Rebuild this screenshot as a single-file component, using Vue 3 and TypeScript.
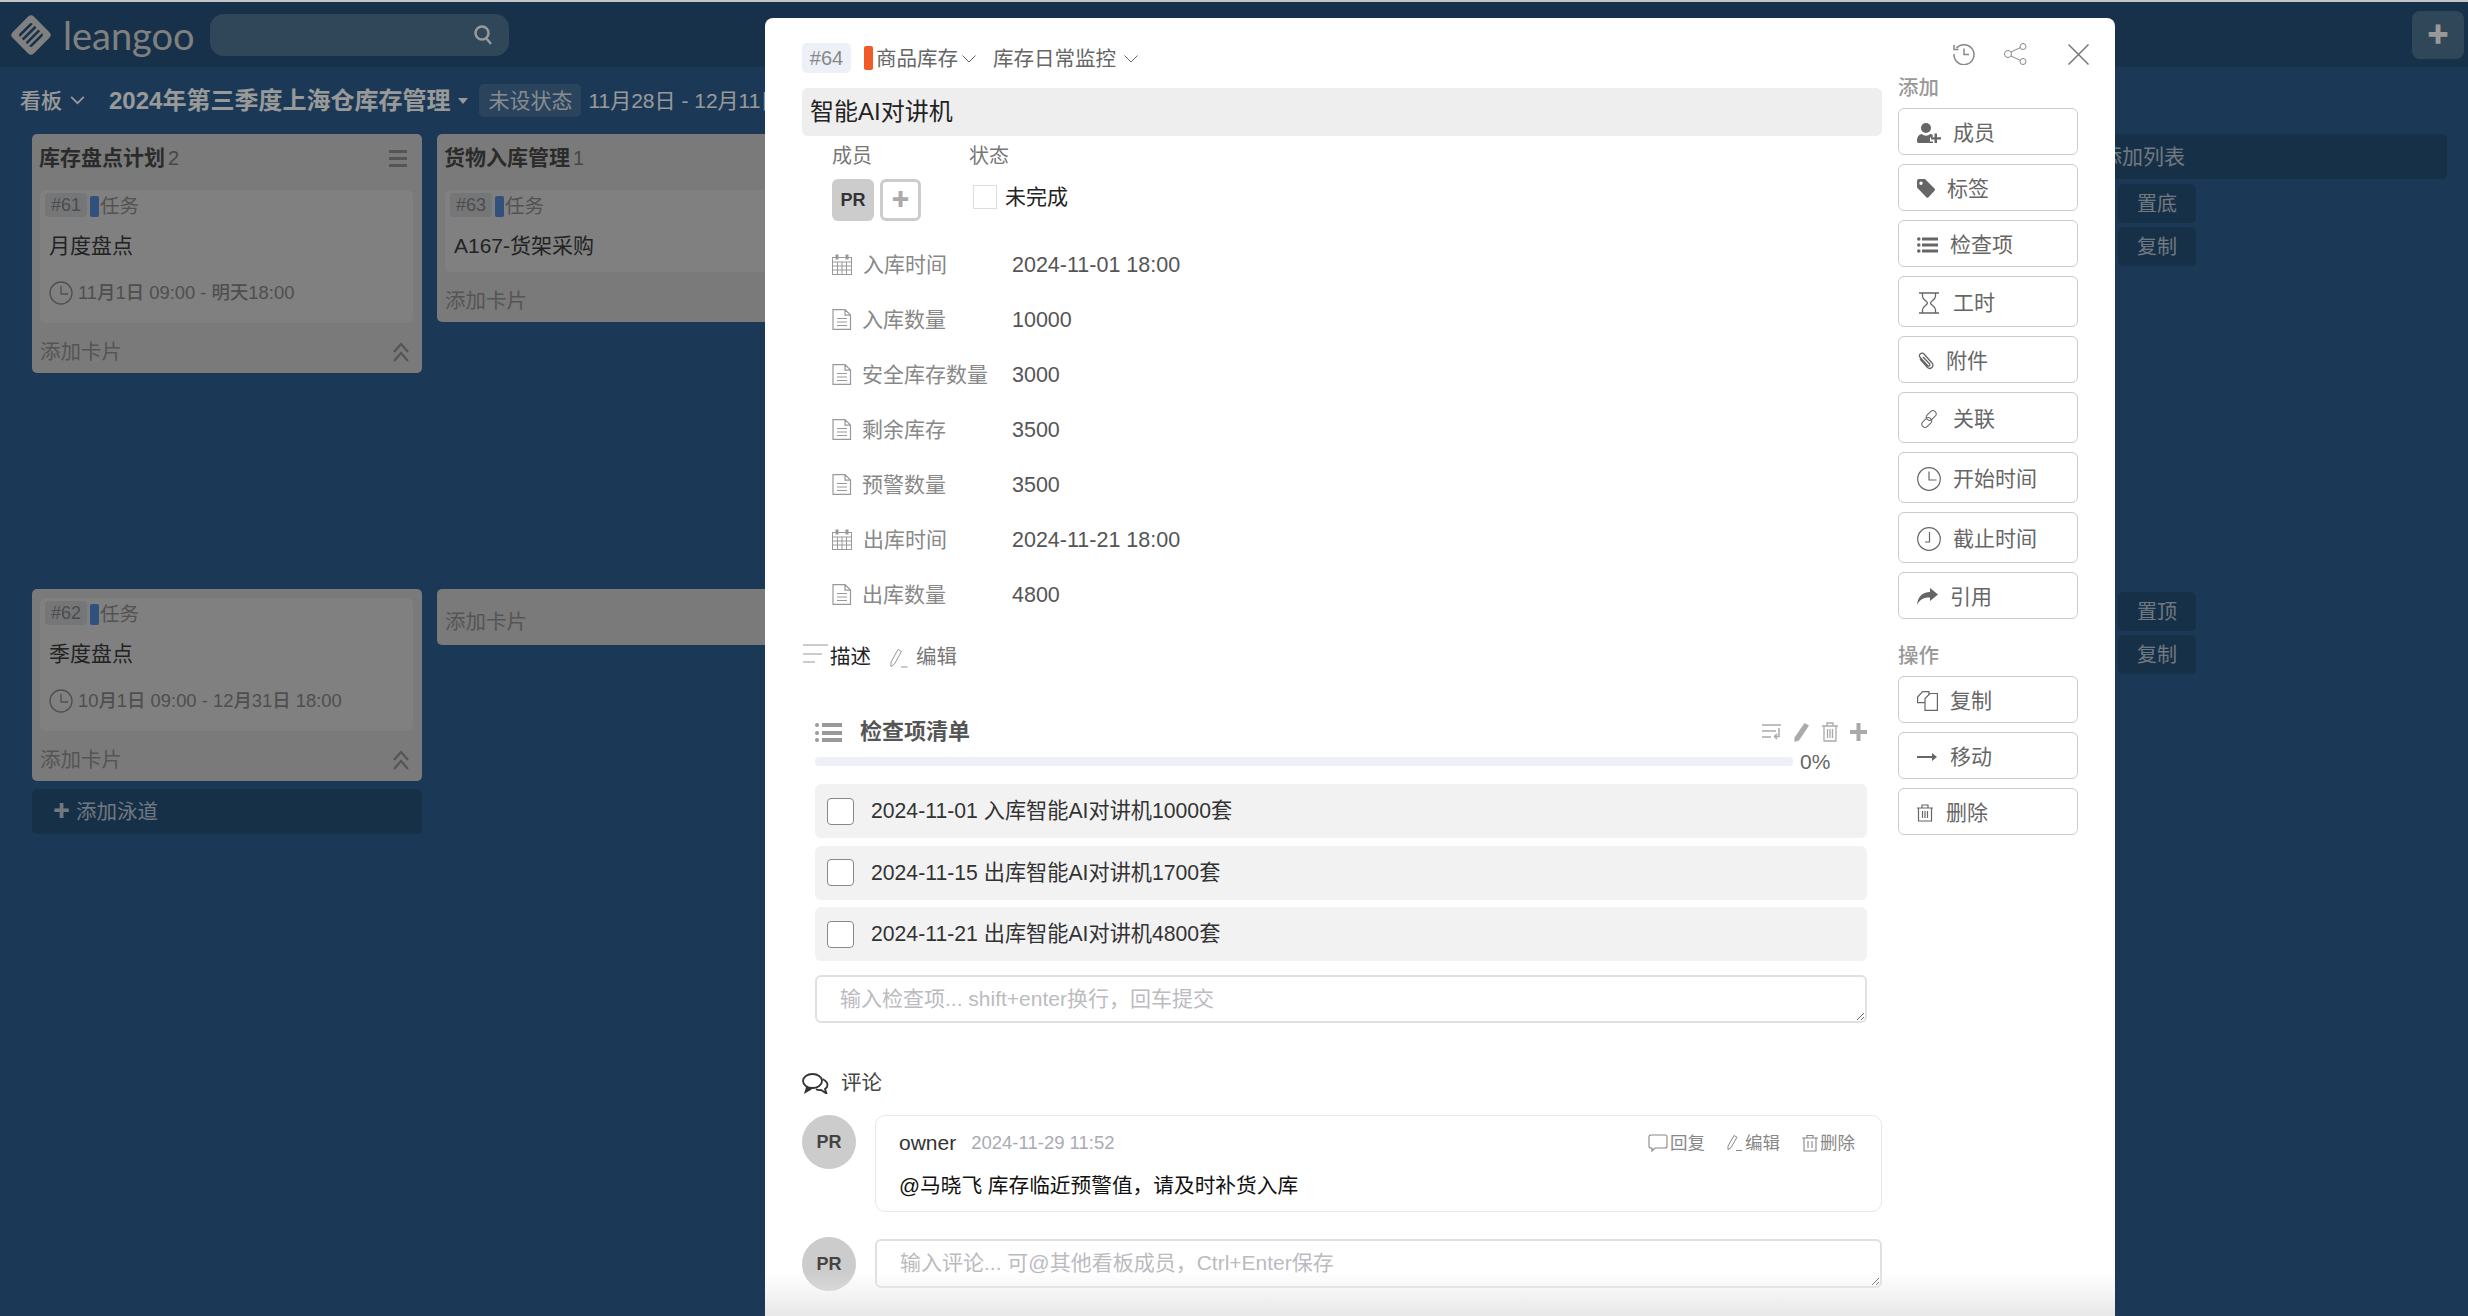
<script setup lang="ts">
type Card = { id: number; title: string; date?: string }
type List = { title: string; count?: number; cards: Card[] }

const laneOne: List[] = [
  { title: '库存盘点计划', count: 2, cards: [{ id: 61, title: '月度盘点', date: '11月1日 09:00 - 明天18:00' }] },
  { title: '货物入库管理', count: 1, cards: [{ id: 63, title: 'A167-货架采购' }] }
]

const laneTwo: Card[] = [{ id: 62, title: '季度盘点', date: '10月1日 09:00 - 12月31日 18:00' }]

const fields = [
  { icon: 'cal', label: '入库时间', value: '2024-11-01 18:00' },
  { icon: 'doc', label: '入库数量', value: '10000' },
  { icon: 'doc', label: '安全库存数量', value: '3000' },
  { icon: 'doc', label: '剩余库存', value: '3500' },
  { icon: 'doc', label: '预警数量', value: '3500' },
  { icon: 'cal', label: '出库时间', value: '2024-11-21 18:00' },
  { icon: 'doc', label: '出库数量', value: '4800' }
]

const checks = [
  '2024-11-01 入库智能AI对讲机10000套',
  '2024-11-15 出库智能AI对讲机1700套',
  '2024-11-21 出库智能AI对讲机4800套'
]

const addButtons = [
  { icon: 'user', label: '成员', left: 36, tall: false },
  { icon: 'tag', label: '标签', left: 30, tall: false },
  { icon: 'list', label: '检查项', left: 33, tall: false },
  { icon: 'hour', label: '工时', left: 36, tall: true },
  { icon: 'clip', label: '附件', left: 29, tall: false },
  { icon: 'link', label: '关联', left: 36, tall: true },
  { icon: 'start', label: '开始时间', left: 36, tall: true },
  { icon: 'end', label: '截止时间', left: 36, tall: true },
  { icon: 'quote', label: '引用', left: 33, tall: false }
]

const opButtons = [
  { icon: 'copy', label: '复制', left: 33, tall: false },
  { icon: 'move', label: '移动', left: 33, tall: false },
  { icon: 'trash', label: '删除', left: 29, tall: false }
]
</script>

<template>
  <div class="page">
    <div class="strip"></div>

    <header class="topbar">
      <svg class="logo" viewBox="0 0 42 42">
        <g transform="rotate(45 21 21)">
          <rect x="6" y="6" width="30" height="30" rx="4" fill="#d5d5d5" />
          <rect x="12" y="12" width="18" height="18" rx="2" fill="#25537b" />
          <rect x="14.500" y="8" width="2.600" height="24" fill="#d5d5d5" />
          <rect x="19.700" y="8" width="2.600" height="24" fill="#d5d5d5" />
          <rect x="24.900" y="8" width="2.600" height="24" fill="#d5d5d5" />
        </g>
      </svg>
      <span class="brand">leangoo</span>
      <div class="search">
        <svg viewBox="0 0 20 22" width="20" height="22" fill="none" stroke="#fff" stroke-width="2.500">
          <circle cx="9" cy="9" r="6.500" />
          <path d="M13 14l5 6" />
        </svg>
      </div>
      <div class="top-plus">✚</div>
    </header>

    <div class="board">
      <div class="board-head">
        <div class="view-switch">看板
          <svg viewBox="0 0 16 10" width="15" height="9" fill="none" stroke="#fff" stroke-width="2"><path d="M1 1l7 7 7-7" /></svg>
        </div>
        <div class="board-title">2024年第三季度上海仓库存管理</div>
        <span class="caret"></span>
        <span class="status-pill">未设状态</span>
        <span class="board-date">11月28日 - 12月11日</span>
      </div>

      <div class="lane lane-one">
        <section v-for="list in laneOne" :key="list.title" class="list">
          <div class="list-head">
            <span class="list-title">{{ list.title }}</span>
            <span class="list-count">{{ list.count }}</span>
            <svg v-if="list.count === 2" class="list-menu" viewBox="0 0 18 17" fill="#8e8e8e">
              <rect y="0" width="18" height="3" /><rect y="7" width="18" height="3" /><rect y="14" width="18" height="3" />
            </svg>
          </div>
          <article v-for="card in list.cards" :key="card.id" class="card" :class="{ 'has-date': card.date }">
            <div class="card-top">
              <span class="card-id">#{{ card.id }}</span>
              <span class="card-bar"></span>
              <span class="card-type">任务</span>
            </div>
            <div class="card-title">{{ card.title }}</div>
            <div v-if="card.date" class="card-date">
              <svg viewBox="0 0 24 24" width="24" height="24" fill="none" stroke="#848484" stroke-width="1.300">
                <circle cx="12" cy="12" r="11" /><path d="M12 5v8h7" />
              </svg>
              {{ card.date }}
            </div>
          </article>
          <div class="list-foot">
            <span>添加卡片</span>
            <svg v-if="list.count === 2" viewBox="0 0 18 22" width="18" height="22" fill="none" stroke="#8e8e8e" stroke-width="2.200">
              <path d="M2 11l7-8 7 8M2 20l7-8 7 8" />
            </svg>
          </div>
        </section>
        <div class="add-col">
          <div class="add-list"><span>添加列表</span></div>
          <div class="side-btn">置底</div>
          <div class="side-btn">复制</div>
        </div>
      </div>

      <div class="lane lane-two">
        <section class="list">
          <article v-for="card in laneTwo" :key="card.id" class="card has-date first-card">
            <div class="card-top">
              <span class="card-id">#{{ card.id }}</span>
              <span class="card-bar"></span>
              <span class="card-type">任务</span>
            </div>
            <div class="card-title">{{ card.title }}</div>
            <div class="card-date">
              <svg viewBox="0 0 24 24" width="24" height="24" fill="none" stroke="#848484" stroke-width="1.300">
                <circle cx="12" cy="12" r="11" /><path d="M12 5v8h7" />
              </svg>
              {{ card.date }}
            </div>
          </article>
          <div class="list-foot">
            <span>添加卡片</span>
            <svg viewBox="0 0 18 22" width="18" height="22" fill="none" stroke="#8e8e8e" stroke-width="2.200">
              <path d="M2 11l7-8 7 8M2 20l7-8 7 8" />
            </svg>
          </div>
        </section>
        <section class="list list-empty">
          <div class="list-foot">
            <span>添加卡片</span>
          </div>
        </section>
        <div class="add-col no-add">
          <div class="side-btn">置顶</div>
          <div class="side-btn">复制</div>
        </div>
      </div>

      <div class="add-lane"><span class="add-lane-plus">✚</span>添加泳道</div>
    </div>

    <div class="mask"></div>

    <div class="modal">
      <div class="modal-main">
        <div class="crumbs">
          <span class="task-id">#64</span>
          <span class="task-bar"></span>
          <span class="crumb">商品库存</span>
          <svg class="chev" viewBox="0 0 14 8" fill="none" stroke="#666" stroke-width="1"><path d="M.5.5L7 7 13.500.5" /></svg>
          <span class="crumb crumb-second">库存日常监控</span>
          <svg class="chev chev-last" viewBox="0 0 14 8" fill="none" stroke="#666" stroke-width="1"><path d="M.5.5L7 7 13.500.5" /></svg>
        </div>
        <div class="task-title">智能AI对讲机</div>

        <div class="meta">
          <div class="meta-members">
            <div class="meta-label">成员</div>
            <div class="member-row">
              <span class="member">PR</span>
              <span class="member-add">✚</span>
            </div>
          </div>
          <div>
            <div class="meta-label">状态</div>
            <div class="status-row">
              <span class="status-box"></span>
              未完成
            </div>
          </div>
        </div>

        <div class="fields">
          <div v-for="f in fields" :key="f.label" class="field">
            <svg v-if="f.icon === 'cal'" class="field-icon" viewBox="0 0 20 21" fill="none" stroke="#999" stroke-width="1">
              <rect x=".5" y="3.500" width="19" height="17" fill="#fff" />
              <path d="M.5 8h19M.5 12h19M.5 16h19M5.500 8v12M10 8v12M14.500 8v12" />
              <path d="M5 .5v5M15 .5v5" stroke-width="3" />
            </svg>
            <svg v-else class="field-icon" viewBox="0 0 20 21" fill="none" stroke="#999" stroke-width="1.200">
              <path d="M1 .6h12l5.500 5.500V20.400H1zM13 .6v5.500h5.500M5 9.500h10M5 13h10M5 16.500h10" />
            </svg>
            <span class="field-label" :class="{ wide: f.icon === 'cal' }">{{ f.label }}</span>
            <span class="field-value">{{ f.value }}</span>
          </div>
        </div>

        <div class="desc">
          <svg class="desc-icon" viewBox="0 0 25 19" fill="none" stroke="#999" stroke-width="1.200">
            <path d="M0 1h25M0 10h19M0 18h12" />
          </svg>
          <span class="desc-title">描述</span>
          <svg class="desc-edit" viewBox="0 0 18 20" fill="none" stroke="#999" stroke-width="1">
            <path d="M1 14L8 1.500l3.500 2L4.500 16l-3.500 2.500zM11 19h6.500" />
          </svg>
          <span class="desc-link">编辑</span>
        </div>

        <div class="checklist">
          <div class="check-head">
            <svg class="check-icon" viewBox="0 0 27 21" fill="#999">
              <rect x="0" y="1" width="4" height="4" rx="2" /><rect x="0" y="9" width="4" height="4" rx="2" /><rect x="0" y="16" width="4" height="4" rx="2" />
              <rect x="7" y="1" width="20" height="4" /><rect x="7" y="9" width="20" height="4" /><rect x="7" y="16" width="20" height="4" />
            </svg>
            <span class="check-title">检查项清单</span>
            <div class="check-tools">
              <svg viewBox="0 0 19 18" width="19" height="18" fill="none" stroke="#aaa" stroke-width="1.500">
                <path d="M0 2h19M0 8h14M0 14h9M17 5v8.500h-4M15 11l-2.500 2.500L15 16" />
              </svg>
              <svg viewBox="0 0 17 20" width="17" height="20" fill="#aaa">
                <path d="M11.500 1l4.500 2.500L6 18.500l-4.500 1.500L1.500 15.500z" />
              </svg>
              <svg viewBox="0 0 16 20" width="16" height="20" fill="none" stroke="#aaa" stroke-width="1.300">
                <path d="M0 4h16M5 4V1h6v3M2 4v15h12V4M5.500 7v9M8 7v9M10.500 7v9" />
              </svg>
              <svg viewBox="0 0 17 18" width="17" height="18" fill="#aaa">
                <path d="M6.500 0h4v7H17v4h-6.500v7h-4v-7H0V7h6.500z" />
              </svg>
            </div>
          </div>
          <div class="progress-row">
            <div class="progress"></div>
            <span class="progress-num">0%</span>
          </div>
          <div v-for="item in checks" :key="item" class="check-item">
            <span class="check-box"></span>
            <span>{{ item }}</span>
          </div>
          <textarea class="check-input" placeholder="输入检查项... shift+enter换行，回车提交"></textarea>
        </div>

        <div class="comments-head">
          <svg viewBox="0 0 27 21" width="27" height="21" fill="none" stroke="#333" stroke-width="1.800">
            <ellipse cx="10.500" cy="8" rx="9.500" ry="7" />
            <path d="M5 14l-1.500 5L9.500 15.500" fill="#333" />
            <path d="M20.500 6c3 1.500 5 3.500 5 6 0 1.800-1 3-2.500 4l1.500 4.500-5.500-3.500c-1.800.3-3.500 0-5-.8" />
          </svg>
          <span>评论</span>
        </div>

        <div class="comment">
          <span class="avatar">PR</span>
          <div class="comment-card">
            <div class="comment-top">
              <span class="comment-user">owner</span>
              <span class="comment-date">2024-11-29 11:52</span>
              <div class="comment-actions">
                <span class="action">
                  <svg viewBox="0 0 20 18" width="20" height="18" fill="none" stroke="#888" stroke-width="1.100"><path d="M3 1h14a2 2 0 0 1 2 2v9a2 2 0 0 1-2 2H7l-3 3v-3H3a2 2 0 0 1-2-2V3a2 2 0 0 1 2-2z" /></svg>回复
                </span>
                <span class="action">
                  <svg viewBox="0 0 16 18" width="16" height="18" fill="none" stroke="#888" stroke-width="1"><path d="M1 12L7 1.500l3 1.700-6 10.500-3 2zM9 16.500h6" /></svg>编辑
                </span>
                <span class="action">
                  <svg viewBox="0 0 16 18" width="16" height="18" fill="none" stroke="#888" stroke-width="1.100"><path d="M0 4h16M5 4V1.500h6V4M2 4v13h12V4M6 7v7M10 7v7" /></svg>删除
                </span>
              </div>
            </div>
            <div class="comment-text">@马晓飞 库存临近预警值，请及时补货入库</div>
          </div>
        </div>

        <div class="comment comment-new">
          <span class="avatar">PR</span>
          <textarea class="comment-input" placeholder="输入评论... 可@其他看板成员，Ctrl+Enter保存"></textarea>
        </div>
      </div>

      <aside class="modal-side">
        <div class="modal-tools">
          <svg viewBox="0 0 22 22" width="22" height="22" fill="none" stroke="#888" stroke-width="1.500">
            <path d="M3.500 5A10 10 0 1 1 1 11M1 2v4.500h4.500M11 5.500V11.500h5" />
          </svg>
          <svg viewBox="0 0 23 22" width="23" height="22" fill="none" stroke="#888" stroke-width="1">
            <circle cx="4" cy="11" r="3.500" /><circle cx="19" cy="3.500" r="3" /><circle cx="19" cy="18.500" r="3" />
            <path d="M7 9l9.500-4.500M7 13l9.500 4.500" />
          </svg>
          <svg class="tool-close" viewBox="0 0 21 21" width="21" height="21" fill="none" stroke="#777" stroke-width="1.500">
            <path d="M.5.5l20 20M20.500.5l-20 20" />
          </svg>
        </div>
        <div class="side-label">添加</div>
        <div v-for="b in addButtons" :key="b.label" class="action-btn" :class="{ tall: b.tall }">
          <span class="action-icon" :style="{ width: b.left + 'px' }">
            <svg v-if="b.icon === 'user'" viewBox="0 0 24 20" width="24" height="20" fill="#666">
              <circle cx="9" cy="5" r="5" />
              <path d="M0 18c0-4 2-7 5-7 1 1 2.500 1.700 4 1.700s3-.7 4-1.700c1 0 2 .4 2.700 1v2.500H13v4h3v1.500H1.500C.6 20 0 19 0 18z" />
              <path d="M17.500 10.500H20v3.700h4v2.400h-4V20h-2.500v-3.400H14v-2.400h3.500z" />
            </svg>
            <svg v-else-if="b.icon === 'tag'" viewBox="0 0 18 19" width="18" height="19" fill="#666" fill-rule="evenodd">
              <path d="M0 2a2 2 0 0 1 2-2h6l9.500 9.500a1.500 1.500 0 0 1 0 2.200l-6 6.500a1.500 1.500 0 0 1-2.200 0L0 8.500zM4 2.500a1.700 1.700 0 1 0 0 3.400 1.700 1.700 0 0 0 0-3.400z" />
            </svg>
            <svg v-else-if="b.icon === 'list'" viewBox="0 0 21 16" width="21" height="16" fill="#666">
              <circle cx="1.800" cy="2" r="1.800" /><circle cx="1.800" cy="8" r="1.800" /><circle cx="1.800" cy="14" r="1.800" />
              <rect x="5" y=".5" width="16" height="3" /><rect x="5" y="6.500" width="16" height="3" /><rect x="5" y="12.500" width="16" height="3" />
            </svg>
            <svg v-else-if="b.icon === 'hour'" class="shift-right" viewBox="0 0 20 22" width="20" height="22" fill="none" stroke="#666" stroke-width="1.300">
              <path d="M0 1h20M0 21h20M3.500 1v3.500c0 3 5 4.500 5 6.500s-5 3.500-5 6.500V21M16.500 1v3.500c0 3-5 4.500-5 6.500s5 3.500 5 6.500V21" />
            </svg>
            <svg v-else-if="b.icon === 'clip'" viewBox="0 0 18 19" width="18" height="19" fill="none" stroke="#666" stroke-width="1.300">
              <path d="M3 8l7.500 8.500a3.200 3.200 0 0 0 4.700-4.300L7 3a2.500 2.500 0 0 0-4 3.300l7.500 8.200a1.200 1.200 0 0 0 2-1.700L6 6" />
            </svg>
            <svg v-else-if="b.icon === 'link'" class="shift-right" viewBox="0 0 20 20" width="20" height="20" fill="none" stroke="#666" stroke-width="1">
              <rect x="9" y="1" width="6.500" height="11" rx="3.200" transform="rotate(45 12.200 6.500)" />
              <rect x="4.500" y="8" width="6.500" height="11" rx="3.200" transform="rotate(45 7.700 13.500)" />
            </svg>
            <svg v-else-if="b.icon === 'start'" viewBox="0 0 24 24" width="24" height="24" fill="none" stroke="#666" stroke-width="1.200">
              <circle cx="12" cy="12" r="11.300" /><path d="M12 4.500v8.500h7.500" />
            </svg>
            <svg v-else-if="b.icon === 'end'" viewBox="0 0 24 24" width="24" height="24" fill="none" stroke="#666" stroke-width="1.200">
              <circle cx="12" cy="12" r="11.300" /><path d="M12.500 5v10H8" />
            </svg>
            <svg v-else viewBox="0 0 21 17" width="21" height="17" fill="#666">
              <path d="M21 6.500L13 0v4C5 4 1 9 0 17c3-6 7-7.500 13-7.500V13z" />
            </svg>
          </span>
          <span class="action-text">{{ b.label }}</span>
        </div>

        <div class="side-label side-label-ops">操作</div>
        <div v-for="b in opButtons" :key="b.label" class="action-btn">
          <span class="action-icon" :style="{ width: b.left + 'px' }">
            <svg v-if="b.icon === 'copy'" viewBox="0 0 21 20" width="21" height="20" fill="#fff" stroke="#666" stroke-width="1.200">
              <path d="M.6 6l5-5.400h6.400v11H.6z" /><path d="M8 19.400V7.500l5-5h7.400v16.900z" />
            </svg>
            <svg v-else-if="b.icon === 'move'" viewBox="0 0 20 10" width="20" height="10" fill="#666">
              <rect y="4" width="17" height="2" /><path d="M15 1l5 4-5 4z" />
            </svg>
            <svg v-else viewBox="0 0 16 18" width="16" height="18" fill="none" stroke="#666" stroke-width="1.200">
              <path d="M0 4h16M5 4V1h6v3M1.500 4v13h13V4M5.500 7v7M8 7v7M10.500 7v7" />
            </svg>
          </span>
          <span class="action-text">{{ b.label }}</span>
        </div>
      </aside>
      <div class="modal-fade"></div>
    </div>
  </div>
</template>

<style scoped>
.page {
  position: relative;
  width: 2468px;
  height: 1316px;
  overflow: hidden;
  background: #2d5f8f;
  font-family: "Liberation Sans", "Noto Sans CJK SC", sans-serif;
  font-size: 21px;
  line-height: 28px;
  color: #222;
}

.strip {
  height: 2px;
  background: #c4c4c4;
  position: relative;
  z-index: 1;
}

.topbar {
  display: flex;
  align-items: center;
  height: 65px;
  background: #25537b;
  color: #fff;
  padding: 0 4px 0 10px;
  box-sizing: border-box;
}

.logo {
  width: 42px;
  height: 42px;
  margin-right: 11px;
}

.brand {
  width: 147px;
  font-family: Lato, sans-serif;
  font-weight: 400;
  font-size: 38px;
  line-height: 50px;
  color: #d5d5d5;
}

.search {
  display: flex;
  align-items: center;
  justify-content: flex-end;
  width: 299px;
  height: 42px;
  padding-right: 16px;
  box-sizing: border-box;
  background: rgba(255, 255, 255, 0.2);
  border-radius: 14px;
}

.top-plus {
  display: flex;
  align-items: center;
  justify-content: center;
  width: 52px;
  height: 48px;
  margin-left: auto;
  background: rgba(255, 255, 255, 0.2);
  border-radius: 8px;
  font-size: 22px;
  color: #fff;
}

.board {
  padding-left: 32px;
}

.board-head {
  display: flex;
  align-items: center;
  height: 67px;
  margin-left: -32px;
  color: #fff;
  font-size: 21px;
  white-space: nowrap;
}

.view-switch {
  display: flex;
  align-items: center;
  gap: 8px;
  width: 89px;
  padding-left: 20px;
  font-weight: 500;
}

.board-title {
  font-weight: 700;
  font-size: 24px;
}

.caret {
  width: 0;
  height: 0;
  margin: 0 11px 0 8px;
  border-left: 5px solid transparent;
  border-right: 5px solid transparent;
  border-top: 6px solid #fff;
}

.status-pill {
  padding: 0 9px;
  margin-right: 7px;
  height: 33px;
  line-height: 33px;
  color: rgba(255, 255, 255, 0.85);
  background: rgba(255, 255, 255, 0.12);
  border-radius: 5px;
}

.lane {
  display: flex;
  align-items: flex-start;
  gap: 15px;
}

.lane-one {
  height: 455px;
}

.lane-two {
  height: 200px;
}

.list {
  width: 390px;
  background: #cbcbcb;
  border-radius: 5px;
}

.list-head {
  display: flex;
  align-items: flex-start;
  height: 56px;
  padding: 10px 15px 0 7px;
  box-sizing: border-box;
  line-height: 28px;
}

.list-title {
  font-size: 21px;
  font-weight: 700;
  color: #484848;
}

.list-count {
  margin-left: 3px;
  color: #777;
  font-size: 20px;
}

.list-menu {
  width: 18px;
  height: 17px;
  margin: 6px 0 0 auto;
}

.card {
  width: 373px;
  height: 82px;
  margin-left: 8px;
  box-sizing: border-box;
  padding: 3px 5px 0;
  background: #d5d5d5;
  border-radius: 6px;
}

.card.has-date {
  height: 133px;
}

.first-card {
  margin-top: 9px;
}

.card-top {
  display: flex;
  align-items: center;
  height: 24px;
}

.card-id {
  width: 42px;
  height: 24px;
  line-height: 24px;
  text-align: center;
  font-size: 18px;
  color: #7f7f7f;
  background: #c4c5c9;
  border-radius: 4px;
}

.card-bar {
  width: 9px;
  height: 21px;
  margin: 2px 1px 0 3px;
  background: #5087d0;
  border-radius: 2px;
}

.card-type {
  color: #8a8a8a;
  font-size: 19.500px;
  margin-top: 2px;
}

.card-title {
  margin: 15px 0 0 4px;
  color: #3a3a3a;
  font-size: 21px;
  line-height: 28px;
}

.card-date {
  display: flex;
  align-items: center;
  gap: 5px;
  margin: 21px 0 0 4px;
  color: #848484;
  font-size: 18.400px;
  line-height: 24px;
  font-weight: 500;
}

.list-foot {
  display: flex;
  align-items: center;
  justify-content: space-between;
  height: 50px;
  padding: 8px 12px 0 8px;
  box-sizing: border-box;
  color: #8e8e8e;
  font-size: 20.500px;
}

.list-empty {
  height: 56px;
  padding-top: 7px;
  box-sizing: border-box;
}

.list-empty .list-foot {
  height: 44px;
}

.add-col {
  margin-left: 1215px;
  width: 390px;
  color: rgba(255, 255, 255, 0.7);
}

.add-col.no-add {
  padding-top: 3px;
}

.add-list {
  height: 45px;
  line-height: 45px;
  padding-left: 44px;
  margin-bottom: 5px;
  font-size: 21px;
  background: rgba(0, 0, 0, 0.15);
  border-radius: 5px;
}

.side-btn {
  width: 78px;
  height: 39px;
  margin: 0 0 4px 61px;
  line-height: 41px;
  text-align: center;
  font-size: 20px;
  background: rgba(0, 0, 0, 0.15);
  border-radius: 5px;
}

.add-lane {
  display: flex;
  align-items: center;
  width: 390px;
  height: 45px;
  padding-left: 21px;
  box-sizing: border-box;
  color: rgba(255, 255, 255, 0.7);
  font-size: 20.500px;
  background: rgba(0, 0, 0, 0.15);
  border-radius: 5px;
}

.add-lane-plus {
  margin-right: 6px;
  font-size: 17px;
}

.mask {
  position: absolute;
  inset: 2px 0 0;
  background: rgba(0, 0, 0, 0.4);
}

.modal {
  position: absolute;
  top: 18px;
  left: 765px;
  bottom: 0;
  display: flex;
  width: 1350px;
  overflow: hidden;
  background: #fff;
  border-radius: 8px 8px 0 0;
}

.modal-main {
  width: 1080px;
  margin-left: 37px;
  padding-top: 25px;
}

.crumbs {
  display: flex;
  align-items: center;
  height: 30px;
  color: #666;
  font-size: 20.500px;
}

.crumb {
  margin-top: 2px;
}

.task-id {
  width: 49px;
  height: 30px;
  line-height: 30px;
  text-align: center;
  margin-right: 13px;
  font-size: 20px;
  color: #888;
  background: #edf0f7;
  border-radius: 5px;
}

.task-bar {
  width: 9px;
  height: 24px;
  margin-right: 3px;
  background: #f15a27;
  border-radius: 2px;
}

.chev {
  width: 14px;
  height: 8px;
  margin: 2px 0 0 4px;
}

.crumb-second {
  margin-left: 17px;
}

.chev-last {
  margin-left: 8px;
}

.task-title {
  height: 48px;
  margin-top: 15px;
  padding-left: 8px;
  line-height: 48px;
  font-size: 24px;
  color: #222;
  background: #eeeeee;
  border-radius: 6px;
}

.meta {
  display: flex;
  margin: 10px 0 0 30px;
}

.meta-members {
  width: 137px;
}

.meta-label {
  height: 20px;
  line-height: 20px;
  color: #777;
  font-size: 20px;
}

.member-row {
  display: flex;
  gap: 6px;
  margin-top: 13px;
}

.member {
  width: 42px;
  height: 42px;
  line-height: 42px;
  text-align: center;
  font-size: 18px;
  font-weight: 700;
  color: #333;
  background: #cccccc;
  border-radius: 6px;
}

.member-add {
  width: 41px;
  height: 42px;
  line-height: 36px;
  box-sizing: border-box;
  text-align: center;
  font-size: 18px;
  color: #aaa;
  border: 3px solid #ccc;
  border-radius: 6px;
}

.status-row {
  display: flex;
  align-items: center;
  gap: 8px;
  margin: 19px 0 0 4px;
  height: 24px;
  color: #222;
}

.status-box {
  width: 24px;
  height: 24px;
  box-sizing: border-box;
  border: 1px solid #ddd;
}

.fields {
  margin: 16px 0 0 30px;
}

.field {
  display: flex;
  align-items: center;
  height: 55px;
}

.field-icon {
  width: 20px;
  height: 21px;
  margin-right: 10px;
}

.field-label {
  width: 150px;
  color: #888;
  font-size: 21px;
}

.field-label.wide {
  text-indent: 1px;
}

.field-value {
  color: #555;
  font-size: 21.500px;
}

.desc {
  display: flex;
  align-items: center;
  height: 28px;
  margin-top: 21px;
}

.desc-icon {
  width: 25px;
  height: 19px;
  margin: -8px 2px 0 1px;
}

.desc-title {
  color: #222;
  font-size: 20.500px;
}

.desc-edit {
  width: 18px;
  height: 20px;
  margin: 2px 8px 0 19px;
}

.desc-link {
  color: #777;
  font-size: 20.500px;
}

.checklist {
  margin: 50px 15px 0 13px;
}

.check-head {
  display: flex;
  align-items: center;
  height: 22px;
}

.check-icon {
  width: 27px;
  height: 21px;
  margin-right: 18px;
}

.check-title {
  font-size: 22px;
  font-weight: 700;
  color: #555;
}

.check-tools {
  display: flex;
  align-items: center;
  gap: 12px;
  margin-left: auto;
}

.progress-row {
  display: flex;
  align-items: center;
  height: 27px;
  margin: 5px 0 9px;
}

.progress {
  width: 978px;
  height: 9px;
  background: #edf0f7;
  border-radius: 4px;
}

.progress-num {
  margin: 0 0 0 7px;
  color: #666;
}

.check-item {
  display: flex;
  align-items: center;
  height: 54px;
  margin-bottom: 7.500px;
  padding-left: 12px;
  background: #f2f2f2;
  border-radius: 6px;
  color: #333;
  font-size: 21.200px;
}

.check-box {
  width: 27px;
  height: 27px;
  margin-right: 17px;
  box-sizing: border-box;
  background: #fff;
  border: 1.500px solid #888;
  border-radius: 4px;
}

.check-input {
  display: block;
  width: 100%;
  height: 48px;
  margin-top: 14px;
  padding: 8px 23px;
  box-sizing: border-box;
  font: inherit;
  line-height: 28px;
  background: #fff;
  border: 2px solid #e0e0e3;
  border-radius: 6px;
  outline: none;
}

.check-input::placeholder,
.comment-input::placeholder {
  color: #bbbbc0;
}

.comments-head {
  display: flex;
  align-items: center;
  gap: 12px;
  height: 28px;
  margin-top: 46px;
  color: #444;
  font-size: 20.500px;
}

.comment {
  display: flex;
  align-items: flex-start;
  gap: 19px;
  margin-top: 18px;
}

.comment-new {
  margin-top: 25px;
}

.avatar {
  flex: none;
  width: 54px;
  height: 54px;
  line-height: 54px;
  text-align: center;
  font-size: 18px;
  font-weight: 700;
  color: #444;
  background: #cccccc;
  border-radius: 50%;
}

.comment-card {
  flex: 1;
  height: 97px;
  box-sizing: border-box;
  padding: 13px 26px 14px 23px;
  border: 1px solid #e8e8ea;
  border-radius: 10px;
}

.comment-top {
  display: flex;
  align-items: center;
  height: 28px;
}

.comment-user {
  font-weight: 500;
  color: #333;
}

.comment-date {
  margin-left: 15px;
  font-size: 18.500px;
  color: #aaaab4;
}

.comment-actions {
  display: flex;
  gap: 22px;
  margin-left: auto;
  color: #888;
  font-size: 17.500px;
}

.action {
  display: flex;
  align-items: center;
  gap: 2px;
}

.comment-text {
  margin-top: 15px;
  color: #111;
  font-size: 20.700px;
}

.comment-input {
  flex: 1;
  height: 49px;
  margin-top: 2px;
  padding: 8px 23px;
  box-sizing: border-box;
  font: inherit;
  line-height: 28px;
  border: 2px solid #e0e0e3;
  border-radius: 6px;
  outline: none;
  background: #fff;
}

.modal-side {
  width: 180px;
  margin-left: 16px;
  padding-top: 25px;
}

.modal-tools {
  display: flex;
  align-items: center;
  gap: 29px;
  height: 22px;
  margin: 0 -11px 0 55px;
}

.tool-close {
  margin-left: 12px;
}

.side-label {
  height: 20px;
  margin-top: 13px;
  line-height: 20px;
  color: #999;
  font-size: 20.500px;
  font-weight: 500;
}

.side-label-ops {
  margin-top: 27px;
  margin-bottom: 1px;
}

.action-btn {
  display: flex;
  align-items: center;
  height: 47px;
  margin-top: 9px;
  padding: 2px 0 0 18px;
  box-sizing: border-box;
  border: 1px solid #ccc;
  border-radius: 6px;
}

.side-label + .action-btn {
  margin-top: 10px;
}

.action-btn.tall {
  height: 51px;
}

.action-icon {
  display: flex;
  flex: none;
}

.shift-right {
  margin-left: 2px;
}

.action-text {
  color: #666;
  white-space: nowrap;
}

.modal-fade {
  position: absolute;
  left: 0;
  right: 0;
  bottom: 0;
  height: 44px;
  background: linear-gradient(to bottom, rgba(232, 232, 232, 0), #e8e8e8);
  pointer-events: none;
}
</style>

<style>
html,
body {
  margin: 0;
  background: #2d5f8f;
}
</style>
